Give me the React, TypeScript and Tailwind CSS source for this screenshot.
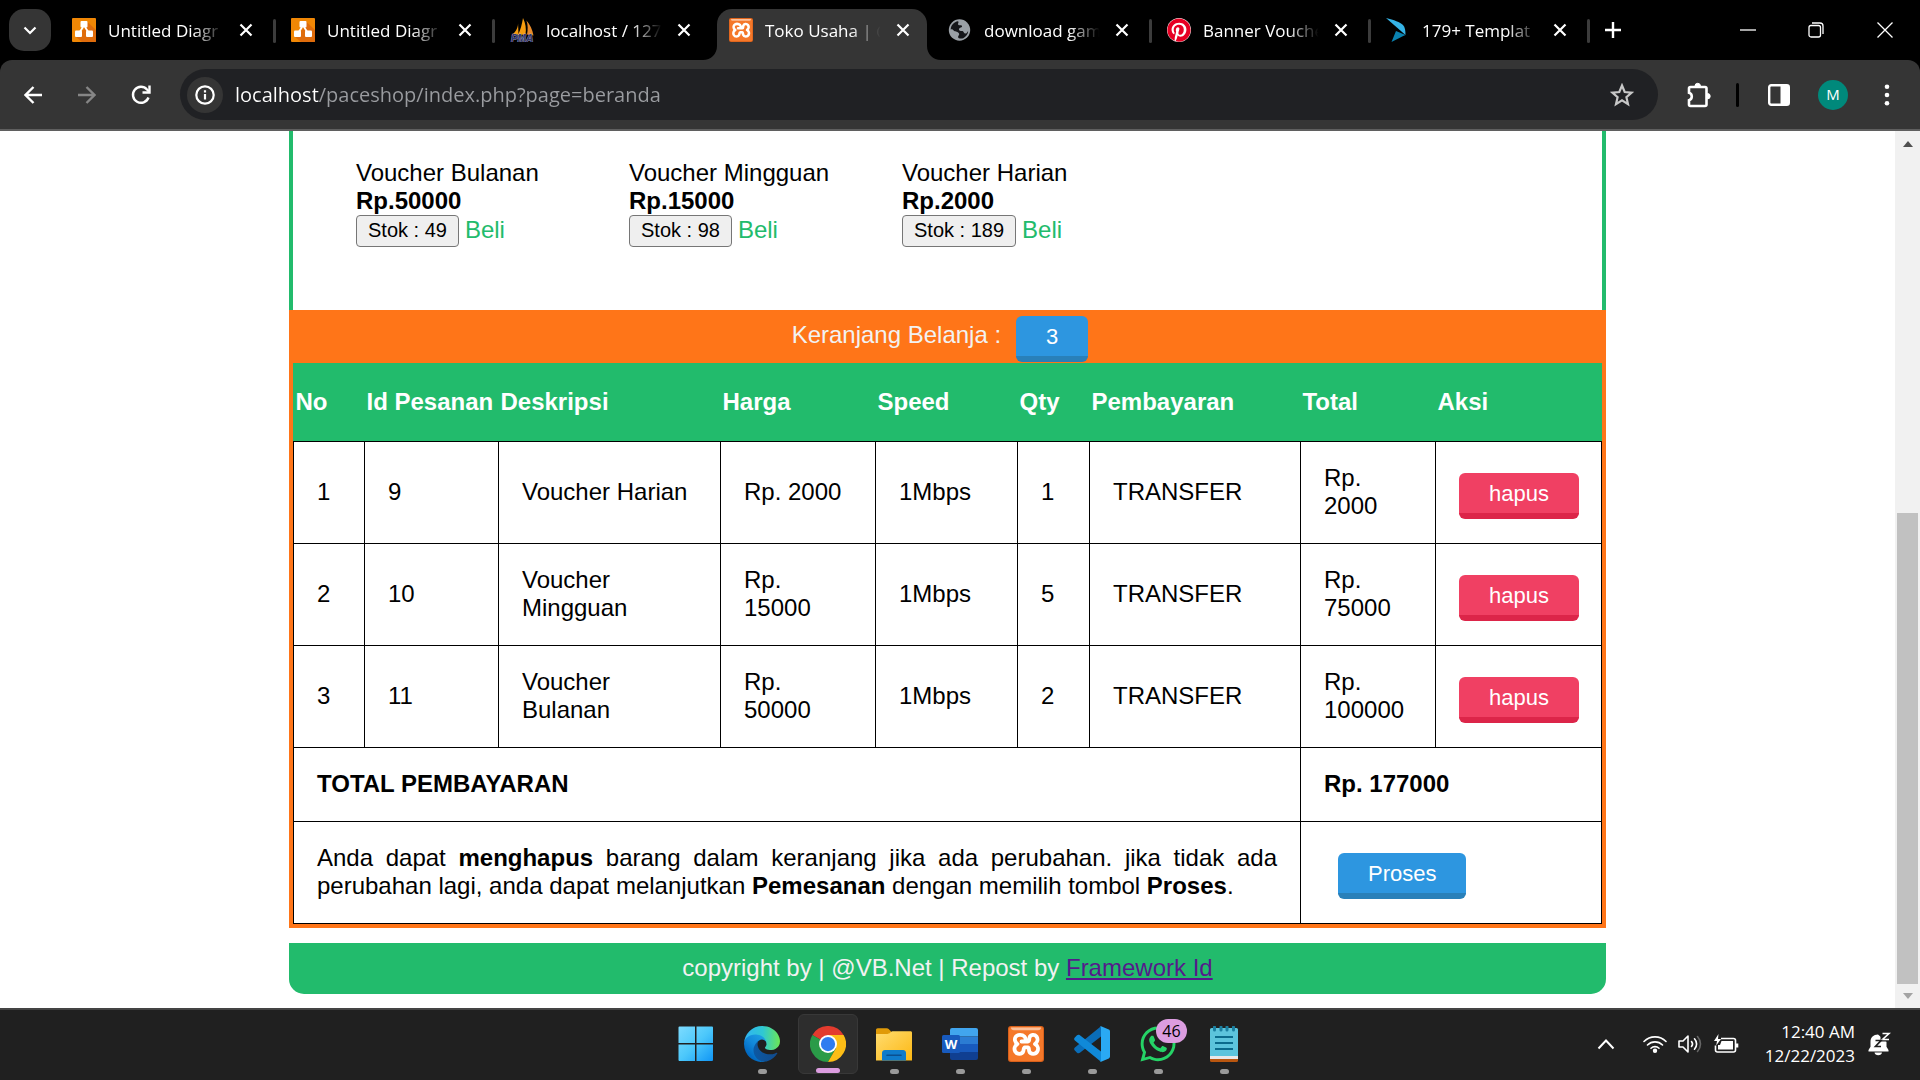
import React from "react";
import { FaWhatsapp, FaPinterest } from "react-icons/fa";

/* ---------- favicons ---------- */

function DrawioIcon() {
  return (
    <svg viewBox="0 0 24 24" className="size-6 shrink-0" aria-hidden="true">
      <rect width="24" height="24" rx="1" fill="#f08705" />
      <path d="M15 3.500L24 12v11a1 1 0 0 1-1 1H10l-6-5 8-8z" fill="#df6c0c" />
      <path d="M11 9L6.500 16M13 9l4.500 7" stroke="#fff" strokeWidth="1.800" />
      <rect x="8.500" y="3" width="7" height="6.500" rx="1" fill="#fff" />
      <rect x="3" y="12.500" width="7" height="6.500" rx="1" fill="#fff" />
      <rect x="14" y="12.500" width="7" height="6.500" rx="1" fill="#fff" />
    </svg>
  );
}

function PmaIcon() {
  return (
    <svg viewBox="0 0 24 24" className="size-6 shrink-0" aria-hidden="true">
      <path d="M8 4c.5 5-2 10-6.500 13.500l7-1z" fill="#f89c0e" />
      <path d="M13 0c-1 6-2.500 12-5 17l7.500-.5C16.500 11 15.500 5 13 0z" fill="#f89c0e" />
      <path d="M16.500 2.500c1.500 5 1.500 9 .5 14l6.500 1c-1-6-3.500-11-7-15z" fill="#e88a2a" />
      <text x="12" y="23.500" textAnchor="middle" fontSize="10" fontWeight="700" fontStyle="italic" fill="#34356b" stroke="#b9bedd" strokeWidth=".7" paintOrder="stroke" fontFamily="Liberation Sans, sans-serif">
        PMA
      </text>
    </svg>
  );
}

function XamppIcon({ large = false }: { large?: boolean }) {
  return (
    <svg viewBox="0 0 36 36" className={large ? "size-9 shrink-0" : "size-6 shrink-0"} aria-hidden="true">
      <rect width="36" height="36" rx="3" fill="#d9601a" />
      <rect x="1" y="1" width="34" height="34" rx="2.500" fill="#f5782a" />
      <path d="M3 1.500h30c0 2-1 2.700-3 2.700H6c-2 0-3-.7-3-2.700z" fill="#fbc09a" />
      <path
        d="M17.500 15.500C18.500 11 15.500 8.800 12 8.800C8.500 8.800 6.300 11.500 7 14.500C7.400 16.300 8.300 17.200 9.500 18C6.500 19.500 5.800 23 7.200 25.500C9 28.600 14 28.600 15.300 25.200C15.900 23.600 15.300 21.500 17 21.300H20C21.300 21.500 20.700 23.600 21.200 25.200C22.500 28.600 27.500 28.600 29.300 25.500C30.700 23 30 19.700 27 18C29.700 16 30.200 12.800 28.500 10.500C26.500 8 22.500 8.500 21.500 11.500C21 13.200 21.700 15.500 20 15.500H13.500"
        fill="none"
        stroke="#fff"
        strokeWidth="3.800"
        strokeLinejoin="round"
        strokeLinecap="round"
      />
    </svg>
  );
}

function GlobeIcon() {
  return (
    <svg viewBox="0 0 24 24" className="size-6 shrink-0" aria-hidden="true">
      <circle cx="11.500" cy="12" r="10.700" fill="#9aa0a6" />
      <path d="M10 3.300c1.500 1-1 2.700.5 3.700s3-.5 3.500 1-2.500 1.500-3 3 1 2 3 2 1.500 2.500 3.500 2.500 1.500-2.500 2.700-2c-.5 3-2.500 5.500-5 6.700-1.500.5-4.700.7-5-.7-.5-2 2-2.500.5-4.500s-4-1-5-2.500-2.500-1.500-3-1C3 7 6 4 10 3.300z" fill="#15161a" />
      <path d="M3 13c2.500-.5 4.500 1 5.500 2.500s1 3 0 4.500C5.500 19 3.200 16.500 3 13z" fill="#9aa0a6" />
    </svg>
  );
}

function BirdIcon() {
  return (
    <svg viewBox="0 0 24 24" className="size-6 shrink-0" aria-hidden="true">
      <path d="M0 0c8 2 14 4 17 7 2 2 2.500 6 2.500 10z" fill="#36b3e6" />
      <path d="M10 13l9.500 4C15 19 11 21 5.500 24z" fill="#0a82b0" />
    </svg>
  );
}

type Tab = { title: string; icon: React.ReactNode; active?: boolean; divider?: boolean };

const tabs: Tab[] = [
  { title: "Untitled Diagr", icon: <DrawioIcon />, divider: true },
  { title: "Untitled Diagr", icon: <DrawioIcon />, divider: true },
  { title: "localhost / 127", icon: <PmaIcon /> },
  { title: "Toko Usaha | @", icon: <XamppIcon />, active: true },
  { title: "download gam", icon: <GlobeIcon />, divider: true },
  {
    title: "Banner Vouche",
    icon: (
      <span className="flex size-6 shrink-0 items-center justify-center rounded-full bg-white">
        <FaPinterest className="size-6 text-[#e60023]" />
      </span>
    ),
    divider: true,
  },
  { title: "179+ Templat", icon: <BirdIcon />, divider: true },
];

function TabItem({ tab }: { tab: Tab }) {
  return (
    <div className="flex h-[51px] shrink-0 items-start">
      <div
        role="tab"
        aria-selected={!!tab.active}
        className={
          tab.active
            ? "relative flex h-[51px] w-[210px] items-center rounded-t-[15px] bg-[#353535] px-3 pb-[9px]"
            : "flex h-[51px] w-[210px] items-center px-3 pb-[9px]"
        }
      >
        {tab.active && (
          <>
            <svg viewBox="0 0 14 14" className="absolute bottom-0 -left-[14px] size-[14px]" aria-hidden="true">
              <path d="M14 0v14H0C8 14 14 8 14 0z" fill="#353535" />
            </svg>
            <svg viewBox="0 0 14 14" className="absolute -right-[14px] bottom-0 size-[14px]" aria-hidden="true">
              <path d="M0 0v14h14C6 14 0 8 0 0z" fill="#353535" />
            </svg>
          </>
        )}
        {tab.icon}
        <span className="mr-2 ml-3 min-w-0 flex-1 overflow-hidden [mask-image:linear-gradient(to_right,black_72%,transparent_98%)] pt-[2px] text-[17px] leading-6 whitespace-nowrap text-white">
          {tab.title}
        </span>
        <button aria-label="Close tab" className="flex size-6 shrink-0 items-center justify-center text-white">
          <svg viewBox="0 0 14 14" className="size-[14px]" fill="none" stroke="currentColor" strokeWidth="2.200">
            <path d="M1.500 1.500l11 11M12.500 1.500l-11 11" />
          </svg>
        </button>
      </div>
      <span className={tab.divider ? "mx-[3px] mt-[10px] h-6 w-[3px] rounded bg-[#3c3c3c]" : "mx-[3px] w-[3px]"} />
    </div>
  );
}

function BrowserChrome() {
  return (
    <header className="bg-black font-['Open_Sans','Noto_Sans',sans-serif]">
      <div className="flex h-[60px] items-end">
        <button aria-label="Search tabs" className="mb-[9px] ml-[9px] flex size-[42px] items-center justify-center rounded-[15px] bg-[#353535] text-white">
          <svg viewBox="0 0 14 14" className="size-[14px]" fill="none" stroke="currentColor" strokeWidth="2.200">
            <path d="M1.500 4.500L7 10l5.500-5.500" />
          </svg>
        </button>
        <div role="tablist" className="ml-[9px] flex">
          {tabs.map((t, i) => (
            <TabItem key={i} tab={t} />
          ))}
        </div>
        <button aria-label="New tab" className="mb-[18px] ml-2 flex size-6 items-center justify-center text-white">
          <svg viewBox="0 0 16 16" className="size-4" fill="none" stroke="currentColor" strokeWidth="2.400">
            <path d="M8 0v16M0 8h16" />
          </svg>
        </button>
        <div className="ml-auto flex h-[60px] text-white">
          <button aria-label="Minimize" className="flex w-[68px] items-center justify-center">
            <svg viewBox="0 0 16 16" className="size-4" stroke="currentColor" strokeWidth="1.300">
              <path d="M0 8h16" />
            </svg>
          </button>
          <button aria-label="Restore" className="flex w-[68px] items-center justify-center">
            <svg viewBox="0 0 16 16" className="size-4" fill="none" stroke="currentColor" strokeWidth="1.300">
              <rect x="1" y="3.500" width="11.500" height="11.500" rx="2" />
              <path d="M4 1h8a3 3 0 0 1 3 3v8" />
            </svg>
          </button>
          <button aria-label="Close" className="flex w-[70px] items-center justify-center">
            <svg viewBox="0 0 16 16" className="size-4" stroke="currentColor" strokeWidth="1.300">
              <path d="M.5.5l15 15M15.500.5l-15 15" />
            </svg>
          </button>
        </div>
      </div>

      <div className="flex items-center rounded-t-[12px] border-b-2 border-[#5f5f5f] bg-[#353535] py-[9px] text-white">
        <button aria-label="Back" className="ml-[21px] flex size-6 items-center justify-center">
          <svg viewBox="0 0 18 18" className="size-[18px]" fill="none" stroke="currentColor" strokeWidth="2.400">
            <path d="M18 9H2M9.500 1L1.500 9l8 8" />
          </svg>
        </button>
        <button aria-label="Forward" className="ml-[30px] flex size-6 items-center justify-center text-[#868686]">
          <svg viewBox="0 0 18 18" className="size-[18px]" fill="none" stroke="currentColor" strokeWidth="2.400">
            <path d="M0 9h16M8.500 1l8 8-8 8" />
          </svg>
        </button>
        <button aria-label="Reload" className="ml-[30px] flex size-6 items-center justify-center">
          <svg viewBox="0 0 20 20" className="size-5" fill="none" stroke="currentColor" strokeWidth="2.400">
            <path d="M17.500 12.500A8 8 0 1 1 16 4.500l2 2" />
            <path d="M18.500.500v7h-7" />
          </svg>
        </button>
        <div className="ml-[27px] flex h-[51px] flex-1 items-center rounded-full bg-[#202124] pr-6 pl-[7px]">
          <button aria-label="View site information" className="flex size-[36px] items-center justify-center rounded-full bg-[#353535]">
            <svg viewBox="0 0 20 20" className="size-5" fill="none" stroke="currentColor" strokeWidth="2.200">
              <circle cx="10" cy="10" r="8.700" />
              <path d="M10 9v5.500M10 5.300v2.200" />
            </svg>
          </button>
          <input
            aria-label="Address"
            defaultValue="localhost/paceshop/index.php?page=beranda"
            className="ml-3 min-w-0 flex-1 bg-[linear-gradient(to_right,#ffffff_84px,#9a9ca0_84px)] bg-clip-text text-[20px] leading-8 text-white outline-none [-webkit-text-fill-color:transparent]"
          />
          <button aria-label="Bookmark this tab" className="text-[#c7c7c7]">
            <svg viewBox="0 0 24 24" className="size-6" fill="none" stroke="currentColor" strokeWidth="2.200">
              <path d="M12 2.500l2.700 6.500 7 .6-5.300 4.600 1.600 6.900L12 17.400l-6 3.700 1.600-6.900L2.300 9.600l7-.6z" />
            </svg>
          </button>
        </div>
        <button aria-label="Extensions" className="ml-[26px]">
          <svg viewBox="0 0 28 28" className="size-7" fill="none" stroke="currentColor" strokeWidth="2.600">
            <path d="M5 7.500c0-1 .5-1.500 1.500-1.500H21c1 0 1.500.5 1.500 1.500v16c0 1-.5 1.500-1.500 1.500H6.500c-1 0-1.500-.5-1.500-1.500v-4.300c3.700-1 3.700-6.400 0-7.400z" />
            <path d="M11 5a2.700 2.700 0 0 1 5.400 0zM23.500 12.500a2.700 2.700 0 0 1 0 5.400z" fill="currentColor" strokeWidth="1" />
          </svg>
        </button>
        <span className="ml-[24px] h-6 w-[3px] rounded bg-black" />
        <button aria-label="Side panel" className="ml-[28px]">
          <svg viewBox="0 0 24 24" className="size-6">
            <rect x="2.200" y="2.200" width="19.600" height="19.600" rx="2" fill="none" stroke="currentColor" strokeWidth="2.400" />
            <path d="M13.500 2H22v20h-8.500z" fill="currentColor" />
          </svg>
        </button>
        <button aria-label="Profile" className="ml-[27px] flex size-[30px] items-center justify-center rounded-full bg-[#00897b] text-[15px]">
          M
        </button>
        <button aria-label="Menu" className="mr-[21px] ml-[27px]">
          <svg viewBox="0 0 24 24" className="size-6" fill="currentColor">
            <circle cx="12" cy="3.700" r="2.300" />
            <circle cx="12" cy="12" r="2.300" />
            <circle cx="12" cy="20.300" r="2.300" />
          </svg>
        </button>
      </div>
    </header>
  );
}

/* ---------- shop page ---------- */

const products = [
  { name: "Voucher Bulanan", price: "Rp.50000", stock: "Stok : 49" },
  { name: "Voucher Mingguan", price: "Rp.15000", stock: "Stok : 98" },
  { name: "Voucher Harian", price: "Rp.2000", stock: "Stok : 189" },
];

const orders = [
  { no: 1, id: 9, desc: "Voucher Harian", price: "Rp. 2000", speed: "1Mbps", qty: 1, pay: "TRANSFER", total: "Rp. 2000" },
  { no: 2, id: 10, desc: "Voucher Mingguan", price: "Rp. 15000", speed: "1Mbps", qty: 5, pay: "TRANSFER", total: "Rp. 75000" },
  { no: 3, id: 11, desc: "Voucher Bulanan", price: "Rp. 50000", speed: "1Mbps", qty: 2, pay: "TRANSFER", total: "Rp. 100000" },
];

const headings = ["No", "Id Pesanan", "Deskripsi", "Harga", "Speed", "Qty", "Pembayaran", "Total", "Aksi"];

const cell = "border border-black px-[23px]";
const blueButton = "h-[46px] rounded-[6px] border-b-[6px] border-[#2980b9] bg-[#2d96e0] px-[30px] pt-[2px] text-[22px] leading-[38px] text-white";
const redButton = "h-[46px] rounded-[6px] border-b-[6px] border-[#dc2549] bg-[#f04063] px-[30px] pt-[2px] text-[22px] leading-[38px] text-white";

function Shop() {
  return (
    <div className="mx-auto w-[69.5%] text-[24px] leading-7 text-black">
      <section className="flex border-x-4 border-[#22bb6c] px-[63px] pt-7 pb-[63px]">
        {products.map((p) => (
          <div key={p.name} className="w-[273px]">
            <div>{p.name}</div>
            <div className="font-bold">{p.price}</div>
            <div className="flex h-8 items-start gap-[6px]">
              <button className="h-8 rounded-[4px] border border-[#767676] bg-[#efefef] px-[11px] pb-[2px] text-[20px]">{p.stock}</button>
              <a href="#beli" className="pt-[1px] text-[#22bb6c]">
                Beli
              </a>
            </div>
          </div>
        ))}
      </section>

      <section className="border-x-4 border-b-4 border-[#ff7518] bg-[#ff7518]">
        <div className="flex h-[53px] items-center justify-center pt-[5px] text-[#f2f2f2]">
          <span className="pb-2">Keranjang Belanja :</span>
          <button className={`${blueButton} mr-[15px] ml-[15px]`}>3</button>
        </div>
        <table className="w-full table-fixed border-collapse bg-white text-left">
          <colgroup>
            <col className="w-[71px]" />
            <col className="w-[134px]" />
            <col className="w-[222px]" />
            <col className="w-[155px]" />
            <col className="w-[142px]" />
            <col className="w-[72px]" />
            <col className="w-[211px]" />
            <col className="w-[135px]" />
            <col className="w-[166px]" />
          </colgroup>
          <thead>
            <tr className="h-[78px] bg-[#22bb6c] text-white">
              {headings.map((h) => (
                <th key={h} scope="col" className="px-[2px] font-bold whitespace-nowrap">
                  {h}
                </th>
              ))}
            </tr>
          </thead>
          <tbody>
            {orders.map((o) => (
              <tr key={o.no} className="h-[102px]">
                <td className={cell}>{o.no}</td>
                <td className={cell}>{o.id}</td>
                <td className={cell}>{o.desc}</td>
                <td className={cell}>{o.price}</td>
                <td className={cell}>{o.speed}</td>
                <td className={cell}>{o.qty}</td>
                <td className={cell}>{o.pay}</td>
                <td className={cell}>{o.total}</td>
                <td className={cell}>
                  <button className={`${redButton} mt-[7px] block`}>hapus</button>
                </td>
              </tr>
            ))}
            <tr className="h-[74px] font-bold">
              <td colSpan={7} className={cell}>
                TOTAL PEMBAYARAN
              </td>
              <td colSpan={2} className={cell}>
                Rp. 177000
              </td>
            </tr>
            <tr className="h-[102px]">
              <td colSpan={7} className={`${cell} text-justify`}>
                Anda dapat <b>menghapus</b> barang dalam keranjang jika ada perubahan. jika tidak ada perubahan lagi, anda dapat
                melanjutkan <b>Pemesanan</b> dengan memilih tombol <b>Proses</b>.
              </td>
              <td colSpan={2} className={cell}>
                <button className={`${blueButton} mt-[7px] ml-[14px] block`}>Proses</button>
              </td>
            </tr>
          </tbody>
        </table>
      </section>

      <footer className="mt-[15px] rounded-b-[15px] bg-[#22bb6c] pt-[11px] pb-3 text-center text-[#f2f2f2]">
        copyright by | @VB.Net | Repost by{" "}
        <a href="#framework" className="text-[#551a8b] underline">
          Framework Id
        </a>
      </footer>
    </div>
  );
}

function Scrollbar() {
  return (
    <div className="flex w-[25px] shrink-0 flex-col bg-[#f1f1f1]" aria-hidden="true">
      <div className="flex h-[25px] items-center justify-center">
        <svg viewBox="0 0 10 6" className="h-[6px] w-[10px]">
          <path d="M5 0l5 6H0z" fill="#505050" />
        </svg>
      </div>
      <div className="grow-[357]" />
      <div className="mx-[2px] grow-[471] bg-[#c1c1c1]" />
      <div className="flex h-[24px] items-center justify-center">
        <svg viewBox="0 0 10 6" className="h-[6px] w-[10px]">
          <path d="M5 6l5-6H0z" fill="#a3a3a3" />
        </svg>
      </div>
    </div>
  );
}

/* ---------- taskbar ---------- */

function WindowsIcon() {
  return (
    <svg viewBox="0 0 36 36" className="size-9">
      <defs>
        <linearGradient id="win" x1="0" y1="0" x2="1" y2="1" gradientUnits="objectBoundingBox">
          <stop offset="0" stopColor="#7fdcff" />
          <stop offset=".5" stopColor="#4cc8fb" />
          <stop offset="1" stopColor="#0d93f5" />
        </linearGradient>
        <mask id="winPanes">
          <path d="M1.500.5h15.500v16.500H.5V1.500a1 1 0 0 1 1-1zM18.500.5H34a1 1 0 0 1 1 1V17H18.500zM.5 18.500H17V35H1.500a1 1 0 0 1-1-1zM18.500 18.500H35V34a1 1 0 0 1-1 1H18.500z" fill="#fff" />
        </mask>
      </defs>
      <rect width="36" height="36" fill="url(#win)" mask="url(#winPanes)" />
    </svg>
  );
}

function EdgeIcon() {
  return (
    <svg viewBox="0 0 256 256" className="size-9">
      <defs>
        <linearGradient id="edgeA" x1="63" y1="178" x2="242" y2="178" gradientUnits="userSpaceOnUse">
          <stop offset="0" stopColor="#0c59a4" />
          <stop offset="1" stopColor="#114a8b" />
        </linearGradient>
        <linearGradient id="edgeB" x1="157" y1="100" x2="46" y2="220" gradientUnits="userSpaceOnUse">
          <stop offset="0" stopColor="#1b9de2" />
          <stop offset=".5" stopColor="#1288da" />
          <stop offset="1" stopColor="#0067bf" />
        </linearGradient>
        <linearGradient id="edgeC" x1="10" y1="80" x2="256" y2="90" gradientUnits="userSpaceOnUse">
          <stop offset="0" stopColor="#2fb5f2" />
          <stop offset=".5" stopColor="#2fc8d2" />
          <stop offset="1" stopColor="#6ce755" />
        </linearGradient>
      </defs>
      <path d="M231 190.500c-3.400 1.800-6.900 3.400-10.500 4.700a101.300 101.300 0 0 1-35.900 6.500c-47.300 0-88.500-32.500-88.500-74.300a31.500 31.500 0 0 1 16.400-27.300c-42.800 1.800-53.800 46.400-53.800 72.500 0 73.900 68.100 81.400 82.800 81.400 7.900 0 19.800-2.300 27-4.600l1.300-.4a128.300 128.300 0 0 0 66.600-52.800 4 4 0 0 0-5.400-5.700z" fill="url(#edgeA)" />
      <path d="M105.700 241.400a79.200 79.200 0 0 1-22.700-21.300 80.700 80.700 0 0 1 29.500-120c3.200-1.500 8.500-4.100 15.600-4a32.400 32.400 0 0 1 25.700 13 31.900 31.900 0 0 1 6.300 18.700c0-.2 24.500-79.600-80-79.600-43.900 0-80 41.700-80 78.200a130.200 130.200 0 0 0 12.100 56 128 128 0 0 0 156.400 67 75.600 75.600 0 0 1-62.800-8z" fill="url(#edgeB)" />
      <path d="M152.300 148.900c-.9 1-3.400 2.500-3.400 5.600 0 2.600 1.700 5.200 4.800 7.300 14.300 10 41.400 8.600 41.500 8.600a59.600 59.600 0 0 0 30.300-8.300 61.400 61.400 0 0 0 30.400-52.900c.3-22.400-8-37.300-11.300-43.900C223.500 23.900 177.700 0 128 0A128 128 0 0 0 0 126.200c.5-36.500 36.800-66 80-66 3.500 0 23.500.3 42 10 16.300 8.600 24.900 18.900 30.800 29.200 6.200 10.700 7.300 24.100 7.300 29.500 0 5.300-2.700 13.300-7.800 20z" fill="url(#edgeC)" />
    </svg>
  );
}

function ChromeIcon() {
  return (
    <svg viewBox="0 0 48 48" className="size-9">
      <path d="M24 24L3.200 12A24 24 0 0 1 44.800 12z" fill="#e33b2e" />
      <path d="M24 24L3.200 12A24 24 0 0 0 24 48l10.400-18z" fill="#2a9b48" />
      <path d="M24 12h20.800A24 24 0 0 1 24 48l10.400-18z" fill="#fdbd16" />
      <circle cx="24" cy="24" r="12" fill="#fff" />
      <circle cx="24" cy="24" r="9.500" fill="#2f7cf0" />
    </svg>
  );
}

function FolderIcon() {
  return (
    <svg viewBox="0 0 36 36" className="size-9">
      <defs>
        <linearGradient id="fold" x1="0" y1="0" x2="1" y2="1">
          <stop offset="0" stopColor="#ffdc70" />
          <stop offset="1" stopColor="#fdb813" />
        </linearGradient>
      </defs>
      <path d="M0 4c0-1 .7-1.700 1.700-1.700h9c.8 0 1.500.3 2 .8L16 6.500V14H0z" fill="#e09a08" />
      <path d="M0 8h11.500c1 0 1.500-.3 2.200-.9L15 6c.6-.5 1-.7 2-.7h17.500c1 0 1.500.6 1.500 1.500V34.500H0z" fill="url(#fold)" />
      <path d="M6 34.500V27c0-2 1.300-3 3-3h18c1.700 0 3 1 3 3v7.500z" fill="#0f7bcb" />
      <path d="M11 29.200h14" stroke="#0b4f8f" strokeWidth="1.600" strokeLinecap="round" />
    </svg>
  );
}

function WordIcon() {
  return (
    <svg viewBox="0 0 36 36" className="size-9">
      <path d="M10 2h24a2 2 0 0 1 2 2v6.500H8V4a2 2 0 0 1 2-2z" fill="#41a5ee" />
      <path d="M8 10.500h28V18H8z" fill="#2b7cd3" />
      <path d="M8 18h28v8H8z" fill="#185abd" />
      <path d="M8 26h28v6a2 2 0 0 1-2 2H10a2 2 0 0 1-2-2z" fill="#103f91" />
      <rect x="0" y="9" width="18" height="18" rx="1.500" fill="#185abd" />
      <text x="9" y="23" textAnchor="middle" fontSize="13" fontWeight="700" fill="#fff" fontFamily="Open Sans, sans-serif">
        W
      </text>
    </svg>
  );
}

function VscodeIcon() {
  return (
    <svg viewBox="0 0 36 36" className="size-9">
      <path d="M.8 24.500l2.200 2.200c.8.7 2 .8 2.900.1L27 10.500V.3L.9 21.500c-1 .8-1 2.200-.1 3z" fill="#0a6db8" />
      <path d="M.8 11.500L3 9.300c.8-.7 2-.8 2.900-.1L27 25.500v10.200L.9 14.500c-1-.8-1-2.200-.1-3z" fill="#1089d8" />
      <path d="M26.500 0l8.300 3.600c.7.3 1.200 1 1.200 1.800v25.200c0 .8-.5 1.500-1.200 1.800L26.500 36c-.3-.5.5-1 .5-1.700V1.700c0-.7-.8-1.200-.5-1.700z" fill="#2aa9f3" />
    </svg>
  );
}

function NotepadIcon() {
  return (
    <svg viewBox="0 0 36 36" className="size-9">
      <path d="M4 31h28v3.500a1.500 1.500 0 0 1-1.500 1.500h-25A1.500 1.500 0 0 1 4 34.500z" fill="#b9560f" />
      <path d="M4 28h28v5H4z" fill="#e8e8e8" />
      <path d="M5.500 2h25A1.500 1.500 0 0 1 32 3.500V30H4V3.500A1.500 1.500 0 0 1 5.500 2z" fill="#5cc4dc" />
      <path d="M9 11h18M9 17h18M9 23h18" stroke="#0b6b8c" strokeWidth="2" />
      <path d="M8.500 1v3M15 1v3M21 1v3M27.500 1v3" stroke="#1b7fa0" strokeWidth="3" strokeLinecap="round" />
    </svg>
  );
}

const apps: { name: string; icon: React.ReactNode; running?: boolean; active?: boolean; badge?: string }[] = [
  { name: "Start", icon: <WindowsIcon /> },
  { name: "Edge", icon: <EdgeIcon />, running: true },
  { name: "Chrome", icon: <ChromeIcon />, active: true },
  { name: "File Explorer", icon: <FolderIcon />, running: true },
  { name: "Word", icon: <WordIcon />, running: true },
  { name: "XAMPP", icon: <XamppIcon large />, running: true },
  { name: "Visual Studio Code", icon: <VscodeIcon />, running: true },
  { name: "WhatsApp", icon: <FaWhatsapp className="size-10 text-[#25d366]" />, running: true, badge: "46" },
  { name: "Notepad", icon: <NotepadIcon />, running: true },
];

function Taskbar() {
  return (
    <footer className="grid h-[72px] grid-cols-[1fr_auto_1fr] items-center border-t-2 border-[#444444] bg-[#202020] pb-[2px] font-['Open_Sans','Noto_Sans',sans-serif] text-white">
      <div />
      <nav className="flex gap-[6px]">
        {apps.map((a) => (
          <button
            key={a.name}
            aria-label={a.name}
            className={
              a.active
                ? "relative flex size-[60px] items-center justify-center rounded-[6px] border border-[#383838] bg-[#2d2d2d]"
                : "relative flex size-[60px] items-center justify-center"
            }
          >
            {a.icon}
            {a.running && <span className="absolute bottom-0 h-[5px] w-[9px] rounded-full bg-[#9a9a9a]" />}
            {a.active && <span className="absolute bottom-0 h-[5px] w-6 rounded-full bg-[#dc9de0]" />}
            {a.badge && (
              <span className="absolute top-[5px] left-[28px] flex h-6 w-[31px] items-center justify-center rounded-full bg-[#dc9de0] text-[16px] text-black">
                {a.badge}
              </span>
            )}
          </button>
        ))}
      </nav>
      <div className="flex items-center justify-end pr-[29px]">
        <button aria-label="Show hidden icons" className="mr-[28px]">
          <svg viewBox="0 0 18 12" className="h-3 w-[18px]" fill="none" stroke="currentColor" strokeWidth="2">
            <path d="M1.500 10.500L9 2.500l7.500 8" />
          </svg>
        </button>
        <button aria-label="Network, sound and battery" className="flex items-center gap-[11px]">
          <svg viewBox="0 0 24 18" className="h-[18px] w-6" fill="none" stroke="currentColor" strokeWidth="1.600" strokeLinecap="round">
            <path d="M1 6.500a15.500 15.500 0 0 1 22 0M4.500 10a10.600 10.600 0 0 1 15 0M8 13.300a5.700 5.700 0 0 1 8 0" />
            <circle cx="12" cy="15.700" r="1.400" fill="currentColor" />
          </svg>
          <svg viewBox="0 0 24 20" className="h-5 w-6" fill="none" stroke="currentColor" strokeWidth="1.600" strokeLinecap="round" strokeLinejoin="round">
            <path d="M1 7h4l5-5v16l-5-5H1z" />
            <path d="M13.500 7.500c1.300 1.500 1.300 3.500 0 5M16.500 4.800c2.800 3 2.800 7.400 0 10.400" />
            <path d="M19.500 2.500c4 4.500 4 10.500 0 15" stroke="#666" />
          </svg>
          <svg viewBox="0 0 26 20" className="h-5 w-[26px]" fill="none" stroke="currentColor" strokeWidth="1.600">
            <path d="M8 4.500h12.500a2 2 0 0 1 2 2V16a2 2 0 0 1-2 2H4.500a2 2 0 0 1-2-2v-4.500" />
            <path d="M8.500 7h11.500v8.500H5v-4.500h2z" fill="currentColor" stroke="none" />
            <path d="M24 9.500v4" strokeWidth="2.600" />
            <path d="M5.500 0L1 7h3l-.8 4.500L8 5H5z" fill="currentColor" stroke="none" />
          </svg>
        </button>
        <div className="ml-[26px] text-right text-[17px] leading-6">
          <div>12:40 AM</div>
          <div>12/22/2023</div>
        </div>
        <button aria-label="Notifications" className="ml-3">
          <svg viewBox="0 0 24 24" className="size-6" fill="currentColor">
            <path d="M11 2.500c-4.500 0-7.500 3-7.500 7.300v5L1.500 18v1.500h20V18l-2-3.200v-5z" />
            <path d="M7.500 20.500h7.500a3.800 3.300 0 0 1-7.500 0z" />
            <rect x="13.500" y="0" width="10.500" height="9.500" fill="#202020" />
            <path d="M15.500 1.500H22l-6.500 6H22" fill="none" stroke="#fff" strokeWidth="1.600" />
            <path d="M8.500 8.500h5.500l-5.500 6H14" fill="none" stroke="#202020" strokeWidth="1.700" />
          </svg>
        </button>
      </div>
    </footer>
  );
}

export default function App() {
  return (
    <div className="flex min-h-screen flex-col bg-white">
      <BrowserChrome />
      <main className="flex flex-1 font-['Liberation_Sans',Arial,sans-serif]">
        <div className="min-w-0 flex-1">
          <Shop />
        </div>
        <Scrollbar />
      </main>
      <Taskbar />
    </div>
  );
}
